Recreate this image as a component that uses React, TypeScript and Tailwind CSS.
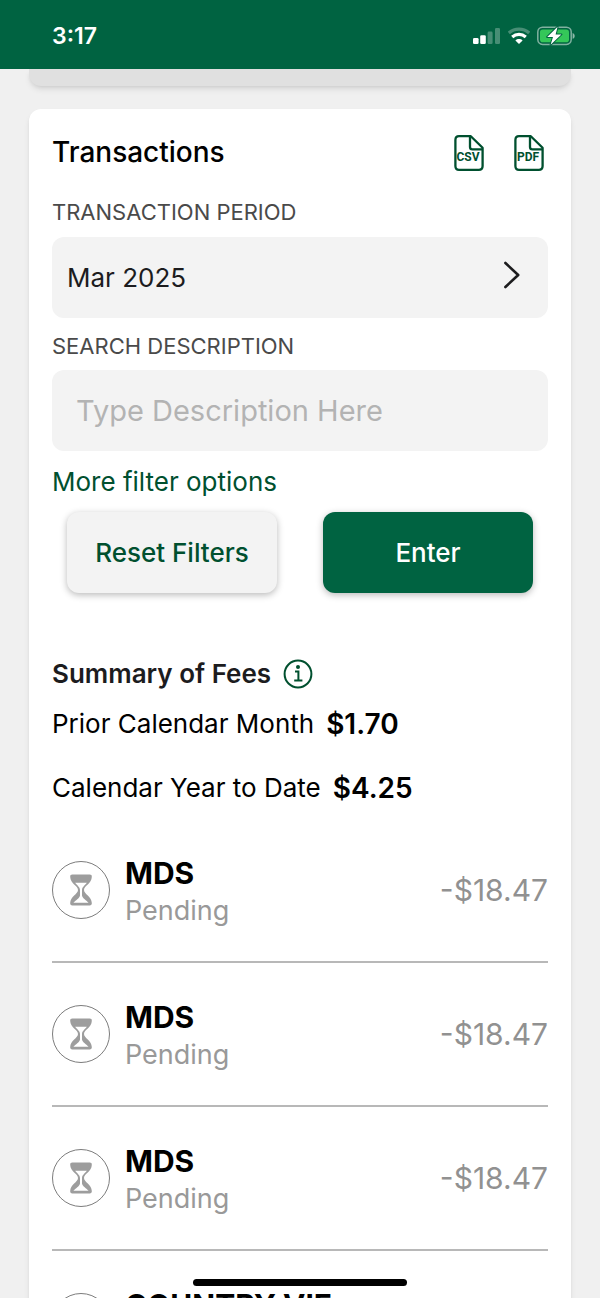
import { useState } from "react";

interface Transaction {
  id: number;
  name: string;
  status?: string;
  amount?: string;
}

const transactions: Transaction[] = [
  { id: 1, name: "MDS", status: "Pending", amount: "-$18.47" },
  { id: 2, name: "MDS", status: "Pending", amount: "-$18.47" },
  { id: 3, name: "MDS", status: "Pending", amount: "-$18.47" },
  { id: 4, name: "COUNTRY VIE" },
];

function StatusBar() {
  return (
    <header className="flex h-[69px] shrink-0 items-center justify-between bg-[#006341] pr-[25px] pl-[52px] pt-[3px]">
      <span className="text-[23px] leading-7 font-semibold text-white">3:17</span>
      <div className="flex items-center gap-[7px]">
        <svg className="h-4 w-7" viewBox="0 0 28 16" fill="white">
          <rect x="0" y="10" width="5.6" height="6" rx="1.3" />
          <rect x="7.2" y="7.2" width="5.6" height="8.8" rx="1.3" />
          <rect x="14.6" y="3.6" width="5" height="12.4" rx="1.3" opacity="0.28" />
          <rect x="22" y="0" width="5" height="16" rx="1.3" opacity="0.28" />
        </svg>
        <svg className="h-[18px] w-[22px]" viewBox="0 0 22 18" fill="none" stroke="white">
          <path d="M0.8 6C6.6 0.8 15.4 0.8 21.2 6" strokeWidth="3.2" opacity="0.28" />
          <path d="M4.2 10C8.2 6.6 13.8 6.6 17.8 10" strokeWidth="3.2" />
          <path d="M7.4 13.4C9.4 11.6 12.6 11.6 14.6 13.4L11 17Z" fill="white" stroke="none" />
        </svg>
        <svg className="h-5 w-[38px]" viewBox="0 0 38 20">
          <rect x="0.8" y="1.2" width="33.4" height="17.2" rx="4.8" fill="none" stroke="white" strokeOpacity="0.5" strokeWidth="1.5" />
          <rect x="3" y="3.4" width="29" height="12.8" rx="2.8" fill="#34c759" />
          <path d="M35.6 7C38.4 7.8 38.4 12 35.6 12.8Z" fill="white" opacity="0.55" />
          <path
            d="M20.6 0.8L10.2 11H16L13.6 18.8L24.4 8.4H18.6Z"
            fill="white"
            stroke="#006341"
            strokeWidth="2"
            paintOrder="stroke"
            strokeLinejoin="round"
          />
        </svg>
      </div>
    </header>
  );
}

function FileIcon({ label }: { label: string }) {
  return (
    <svg className="h-9 w-[30px]" viewBox="0 0 30 36" fill="none" stroke="#00502f" strokeWidth="2.3">
      <path
        d="M5 1.2H16.8L28.6 12.8V31Q28.6 34.8 24.8 34.8H5Q1.4 34.8 1.4 31V5Q1.4 1.2 5 1.2Z"
        strokeLinejoin="round"
      />
      <path d="M16 1.4V12Q16 14.4 18.4 14.4H28.4" />
      <text
        className="font-['Roboto',sans-serif] text-[12px] font-bold"
        x="14"
        y="26"
        textAnchor="middle"
        fill="#00502f"
        stroke="none"
      >
        {label}
      </text>
    </svg>
  );
}

function InfoIcon() {
  return (
    <svg className="h-[30px] w-[30px]" viewBox="0 0 30 30" fill="none" stroke="#00502f" strokeWidth="2">
      <circle cx="15" cy="15" r="13.4" />
      <path d="M12 12.4H15.4V21.6M11.2 21.6H19.4" strokeWidth="2" />
      <circle cx="15" cy="8" r="2" fill="#00502f" stroke="none" />
    </svg>
  );
}

function HourglassIcon() {
  return (
    <svg className="h-8 w-[22px]" viewBox="0 0 22 32" fill="#9d9d9d">
      <path d="M2.4 0.6H19.6Q22 0.6 21.8 3C21.6 9.6 14 11.8 14 16C14 20.2 21.6 22.4 21.8 29Q22 31.4 19.6 31.4H2.4Q0 31.4 0.2 29C0.4 22.4 8 20.2 8 16C8 11.8 0.4 9.6 0.2 3Q0 0.6 2.4 0.6Z" />
      <path
        d="M5.2 8.8H16.8C15 11.4 12.2 12.8 12 16V21.4C12.4 24.6 16.6 26 18.6 28.8H3.4C5.4 26 9.6 24.6 10 21.4V16C9.8 12.8 7 11.4 5.2 8.8Z"
        fill="white"
      />
    </svg>
  );
}

function Fee({ label, amount }: { label: string; amount: string }) {
  return (
    <div className="flex h-8 items-center gap-3 leading-8 text-black">
      <dt className="text-[26px]">{label}</dt>
      <dd className="text-[28px] font-semibold">{amount}</dd>
    </div>
  );
}

function TransactionRow({ transaction }: { transaction: Transaction }) {
  return (
    <li className="flex h-36 items-center border-b-2 border-[#b8b8b8]">
      <div className="flex h-[58px] w-[58px] shrink-0 items-center justify-center rounded-full border border-[#7c7c7c]">
        <HourglassIcon />
      </div>
      <div className="ml-[15px] flex-1 pt-[3px]">
        <div className="text-[30px] leading-[37px] font-bold text-black">{transaction.name}</div>
        <div className="min-h-[37px] text-[27px] leading-[37px] text-[#999]">{transaction.status}</div>
      </div>
      <div className="text-[30px] leading-[37px] text-[#919191]">{transaction.amount}</div>
    </li>
  );
}

export default function App() {
  const [description, setDescription] = useState("");

  return (
    <div className="relative flex h-screen flex-col overflow-hidden bg-[#f0f0f0] font-['Inter',sans-serif]">
      <StatusBar />
      <main className="min-h-0 flex-1 overflow-hidden px-[29px]">
        <div className="h-[17px] rounded-b-xl bg-[#e0e0e0] shadow-md"></div>
        <section className="mt-[23px] rounded-xl bg-white px-[23px] pt-[26px] shadow-md">
          <div className="flex h-9 items-start justify-between">
            <h1 className="text-[28px] leading-[34px] font-medium text-black">Transactions</h1>
            <div className="flex gap-[30px] pr-1">
              <button type="button" aria-label="Download CSV">
                <FileIcon label="CSV" />
              </button>
              <button type="button" aria-label="Download PDF">
                <FileIcon label="PDF" />
              </button>
            </div>
          </div>

          <form onSubmit={(e) => e.preventDefault()}>
            <label htmlFor="period" className="mt-[27px] mb-[11px] block text-[22px] leading-7 text-[#4a4a4a]">
              TRANSACTION PERIOD
            </label>
            <button
              id="period"
              type="button"
              className="flex h-[81px] w-full items-center justify-between rounded-xl bg-[#f3f3f3] pr-7 pl-[15px] text-[26px] leading-8 text-[#1c1c1e]"
            >
              Mar 2025
              <svg className="mb-1.5 h-7 w-4" viewBox="0 0 16 28" fill="none" stroke="#1c1c1e" strokeWidth="2.6" strokeLinecap="round" strokeLinejoin="round">
                <path d="M1.4 2L14.2 14L1.4 26" />
              </svg>
            </button>

            <label htmlFor="description" className="mt-[14px] mb-[10px] block text-[22px] leading-7 text-[#4a4a4a]">
              SEARCH DESCRIPTION
            </label>
            <input
              id="description"
              type="text"
              placeholder="Type Description Here"
              value={description}
              onChange={(e) => setDescription(e.target.value)}
              className="block h-[81px] w-full rounded-xl bg-[#f3f3f3] px-6 text-[29px] text-[#1c1c1e] placeholder:text-[#b3b3b3]"
            />

            <a href="#filters" className="mt-[17px] block text-[26px] leading-7 text-[#00502f]">
              More filter options
            </a>

            <div className="mt-4 flex gap-[46px] px-[15px]">
              <button
                type="reset"
                onClick={() => setDescription("")}
                className="h-[81px] flex-1 rounded-xl bg-[#f3f3f3] text-[26px] font-medium text-[#00502f] shadow-[0_2px_7px_rgba(0,0,0,0.28)]"
              >
                Reset Filters
              </button>
              <button
                type="submit"
                className="h-[81px] flex-1 rounded-xl bg-[#006341] text-[26px] font-medium text-white shadow-[0_2px_7px_rgba(0,0,0,0.28)]"
              >
                Enter
              </button>
            </div>
          </form>

          <div className="mt-[65px] flex h-8 items-center gap-3">
            <h2 className="text-[26px] leading-8 font-semibold text-[#1c1c1e]">Summary of Fees</h2>
            <button type="button" aria-label="About fees">
              <InfoIcon />
            </button>
          </div>
          <dl className="mt-[18px] flex flex-col gap-8">
            <Fee label="Prior Calendar Month" amount="$1.70" />
            <Fee label="Calendar Year to Date" amount="$4.25" />
          </dl>

          <ul className="mt-[15px]">
            {transactions.map((transaction) => (
              <TransactionRow key={transaction.id} transaction={transaction} />
            ))}
          </ul>
        </section>
      </main>
      <div className="absolute bottom-3 left-1/2 h-[7px] w-[214px] -translate-x-1/2 rounded-full bg-black"></div>
    </div>
  );
}
